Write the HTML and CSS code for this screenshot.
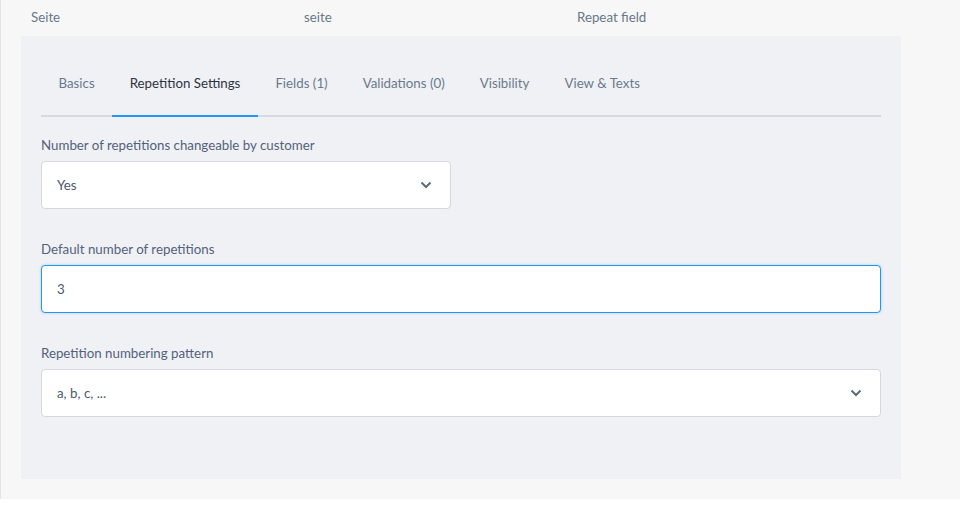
FILE: index.html
```html
<!DOCTYPE html>
<html lang="en">
<head>
<meta charset="utf-8">
<title>Repeat field</title>
<link rel="stylesheet" href="styles.css">
</head>
<body>
<div class="page">
  <div class="header">
    <div class="hcell">Seite</div>
    <div class="hcell">seite</div>
    <div class="hcell">Repeat field</div>
  </div>
  <div class="panel">
    <div class="tabs">
      <div class="tab">Basics</div>
      <div class="tab active">Repetition Settings</div>
      <div class="tab">Fields (1)</div>
      <div class="tab">Validations (0)</div>
      <div class="tab">Visibility</div>
      <div class="tab">View &amp; Texts</div>
    </div>
    <div class="fields">
      <div class="field">
        <div class="label">Number of repetitions changeable by customer</div>
        <div class="control select narrow">
          <span>Yes</span>
          <svg class="chev" width="12" height="8" viewBox="0 0 12 8"><path d="M1.5 1.5 L6 6 L10.5 1.5" fill="none" stroke="#5b6b7c" stroke-width="2"/></svg>
        </div>
      </div>
      <div class="field">
        <div class="label">Default number of repetitions</div>
        <div class="control input focus"><span>3</span></div>
      </div>
      <div class="field">
        <div class="label">Repetition numbering pattern</div>
        <div class="control select">
          <span>a, b, c, ...</span>
          <svg class="chev" width="12" height="8" viewBox="0 0 12 8"><path d="M1.5 1.5 L6 6 L10.5 1.5" fill="none" stroke="#5b6b7c" stroke-width="2"/></svg>
        </div>
      </div>
    </div>
  </div>
</div>
</body>
</html>
```
FILE: styles.css
```css
* { box-sizing: border-box; }
html, body { margin: 0; padding: 0; background: #ffffff; }
body {
  font-family: "Lato", "Open Sans", sans-serif;
  font-size: 13.3px;
  color: #52627a;
}
.page {
  width: 960px;
  height: 499px;
  background: #f7f7f7;
  border-left: 1px solid #e4e4e4;
  padding: 0 0 0 20px;
}
.header {
  display: flex;
  height: 36px;
  align-items: center;
  padding-left: 10px;
  padding-bottom: 2px;
}
.hcell {
  width: 273px;
  color: #687789;
  line-height: 18px;
}
.panel {
  width: 880px;
  height: 443px;
  background: #f0f1f5;
  padding: 14px 20px 0 20px;
}
.tabs {
  display: flex;
  border-bottom: 2px solid #d6dbe1;
}
.tab {
  padding: 24px 17.5px 23px;
  line-height: 18px;
  color: #6a7a8c;
  margin-bottom: -2px;
  border-bottom: 2px solid transparent;
}
.tab.active {
  color: #2c3440;
  border-bottom-color: #2196f3;
}
.fields {
  display: flex;
  flex-direction: column;
  gap: 31px;
  padding-top: 19px;
}
.field { display: flex; flex-direction: column; }
.label {
  line-height: 18px;
  color: #52627a;
  margin-bottom: 7px;
}
.control {
  height: 48px;
  background: #ffffff;
  border: 1px solid #d3d9df;
  border-radius: 4px;
  display: flex;
  align-items: center;
  justify-content: space-between;
  padding: 0 18px 0 15px;
  color: #4a5a6c;
}
.control.narrow { width: 410px; }
.control.focus {
  border-color: #2196f3;
  box-shadow: 0 0 3px rgba(33, 150, 243, 0.35);
}
.chev { display: block; }
```
